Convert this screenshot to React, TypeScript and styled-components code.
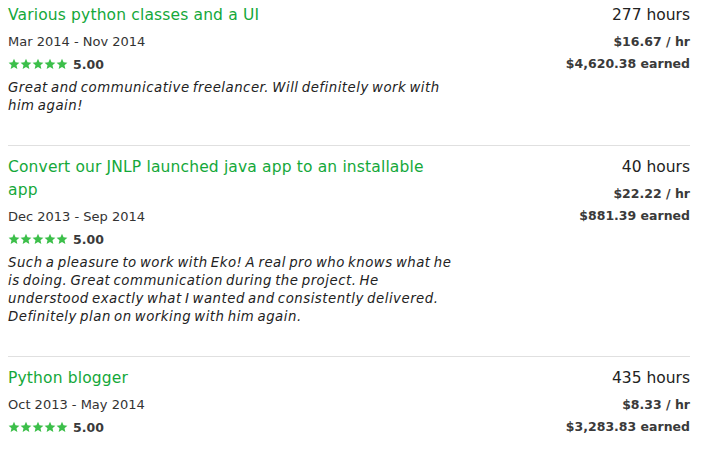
import React from "react";
import styled, { createGlobalStyle } from "styled-components";

const Global = createGlobalStyle`
  html, body { margin: 0; padding: 0; background: #fff; }
  body { font-family: "DejaVu Sans", "Liberation Sans", sans-serif; color: #222; }
`;

const List = styled.div`
  width: 682px;
  padding-left: 8px;
`;

const Item = styled.div<{ $first?: boolean }>`
  display: flex;
  justify-content: space-between;
  padding: ${(p) => (p.$first ? "4px" : "10px")} 0 30px;
  border-top: ${(p) => (p.$first ? "none" : "1px solid #e0e0e0")};
`;

const Left = styled.div`
  width: 447px;
`;

const Right = styled.div`
  display: flex;
  flex-direction: column;
  align-items: flex-end;
`;

const Title = styled.a`
  display: block;
  color: #14a83a;
  font-size: 15.5px;
  line-height: 23px;
  letter-spacing: 0.15px;
  text-decoration: none;
`;

const Dates = styled.div`
  margin-top: 5px;
  font-size: 13px;
  line-height: 20px;
  color: #333;
`;

const Rating = styled.div`
  display: flex;
  align-items: center;
  gap: 5px;
  margin-top: 2px;
  height: 20px;
  font-size: 12.5px;
  font-weight: 700;
  color: #3a3a3a;
`;

const Stars = styled.span`
  display: inline-flex;
`;

const Comment = styled.p`
  margin: 5px 0 0;
  font-size: 13.3px;
  line-height: 18px;
  letter-spacing: 0.5px;
  word-spacing: -1.5px;
  font-style: italic;
  color: #222;
`;

const Hours = styled.div`
  font-size: 15.5px;
  line-height: 23px;
  color: #222;
`;

const Money = styled.div<{ $first?: boolean }>`
  margin-top: ${(p) => (p.$first ? "5px" : "2px")};
  font-size: 12.5px;
  line-height: 20px;
  font-weight: 700;
  color: #3a3a3a;
`;

const Star = () => (
  <svg width="12" height="12" viewBox="0 0 24 24">
    <path
      fill="#3cbf4a"
      d="M12 1.5l3.1 7.1 7.7.7-5.8 5.1 1.7 7.6L12 18l-6.7 4 1.7-7.6L1.2 9.3l7.7-.7z"
    />
  </svg>
);

type Job = {
  title: string;
  dates: string;
  comment?: string;
  hours: string;
  rate: string;
  earned: string;
};

const jobs: Job[] = [
  {
    title: "Various python classes and a UI",
    dates: "Mar 2014 - Nov 2014",
    comment: "Great and communicative freelancer. Will definitely work with him again!",
    hours: "277 hours",
    rate: "$16.67 / hr",
    earned: "$4,620.38 earned",
  },
  {
    title: "Convert our JNLP launched java app to an installable app",
    dates: "Dec 2013 - Sep 2014",
    comment:
      "Such a pleasure to work with Eko! A real pro who knows what he is doing. Great communication during the project. He understood exactly what I wanted and consistently delivered. Definitely plan on working with him again.",
    hours: "40 hours",
    rate: "$22.22 / hr",
    earned: "$881.39 earned",
  },
  {
    title: "Python blogger",
    dates: "Oct 2013 - May 2014",
    hours: "435 hours",
    rate: "$8.33 / hr",
    earned: "$3,283.83 earned",
  },
];

export default function App() {
  return (
    <>
      <Global />
      <List>
        {jobs.map((j, i) => (
          <Item key={i} $first={i === 0}>
            <Left>
              <Title href="#">{j.title}</Title>
              <Dates>{j.dates}</Dates>
              <Rating>
                <Stars>
                  {[0, 1, 2, 3, 4].map((k) => (
                    <Star key={k} />
                  ))}
                </Stars>
                5.00
              </Rating>
              {j.comment && <Comment>{j.comment}</Comment>}
            </Left>
            <Right>
              <Hours>{j.hours}</Hours>
              <Money $first>{j.rate}</Money>
              <Money>{j.earned}</Money>
            </Right>
          </Item>
        ))}
      </List>
    </>
  );
}
